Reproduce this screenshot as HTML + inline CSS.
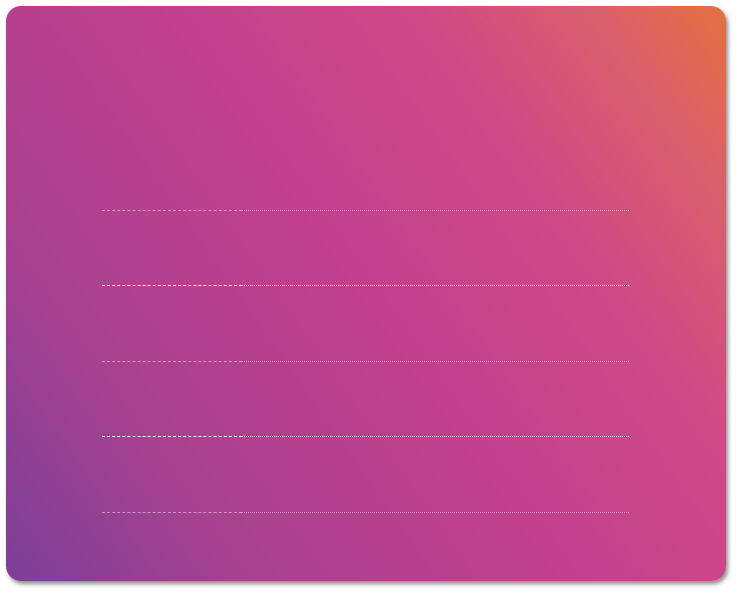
<!DOCTYPE html>
<html><head><style>
html,body{margin:0;padding:0;width:738px;height:593px;background:#fff;overflow:hidden}
.card{position:absolute;left:6px;top:6px;width:720px;height:575px;border-radius:15px;
background:linear-gradient(55deg,#7b3f98 0%,#a8418f 22%,#c2408e 50%,#cc4a86 72%,#d8606c 88%,#e4713f 100%);
box-shadow:2px 3px 4px rgba(0,0,0,0.45);}
.l{position:absolute;left:96px;width:527px;height:0}
.l .a{position:absolute;left:0;top:0;width:140px;border-top:1px dashed}
.l .b{position:absolute;left:140px;top:0;width:387px;border-top:1px dotted}
.f .a,.f .b{border-color:rgba(255,255,255,0.45)}
.s .a,.s .b{border-color:rgba(255,255,255,0.95)}
</style></head><body>
<div class="card">
<div class="l f" style="top:204px"><div class="a"></div><div class="b"></div></div>
<div class="l s" style="top:279px"><div class="a"></div><div class="b"></div></div>
<div class="l f" style="top:355px"><div class="a"></div><div class="b"></div></div>
<div class="l s" style="top:430px"><div class="a"></div><div class="b"></div></div>
<div class="l f" style="top:506px"><div class="a"></div><div class="b"></div></div>
</div>
</body></html>
